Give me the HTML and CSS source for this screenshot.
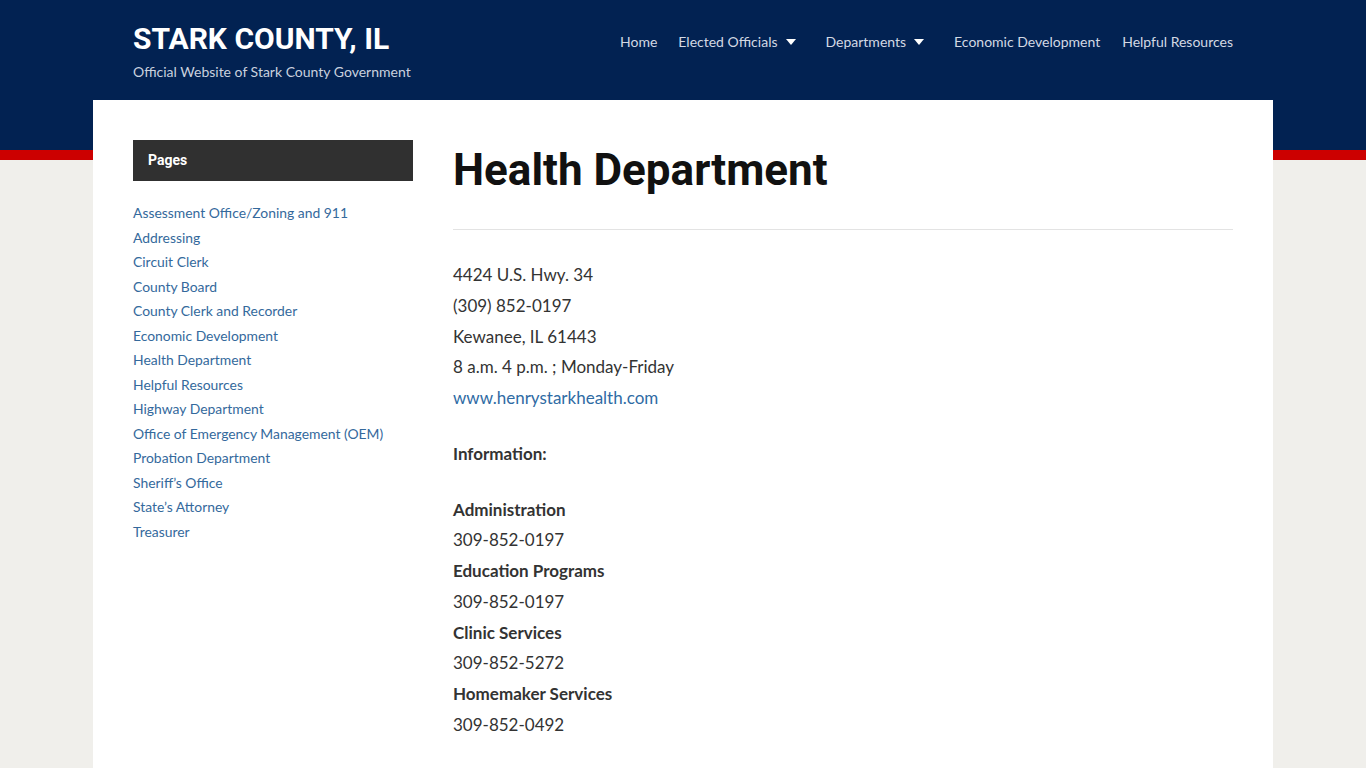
FILE: index.html
```html
<!DOCTYPE html>
<html lang="en">
<head>
<meta charset="utf-8">
<title>Health Department – Stark County, IL</title>
<link rel="stylesheet" href="styles.css">
</head>
<body>
<header class="site-header">
  <div class="header-inner">
    <div class="branding">
      <div class="site-title">STARK COUNTY, IL</div>
      <div class="site-desc">Official Website of Stark County Government</div>
    </div>
    <nav class="main-nav">
      <a href="#" class="nav-link">Home</a>
      <a href="#" class="nav-link has-caret">Elected Officials<span class="caret"></span></a>
      <a href="#" class="nav-link has-caret">Departments<span class="caret"></span></a>
      <a href="#" class="nav-link">Economic Development</a>
      <a href="#" class="nav-link">Helpful Resources</a>
    </nav>
  </div>
</header>
<div class="page-box">
  <aside class="sidebar">
    <div class="widget-title">Pages</div>
    <ul class="page-list">
      <li><a href="#">Assessment Office/Zoning and 911</a></li>
      <li><a href="#">Addressing</a></li>
      <li><a href="#">Circuit Clerk</a></li>
      <li><a href="#">County Board</a></li>
      <li><a href="#">County Clerk and Recorder</a></li>
      <li><a href="#">Economic Development</a></li>
      <li><a href="#">Health Department</a></li>
      <li><a href="#">Helpful Resources</a></li>
      <li><a href="#">Highway Department</a></li>
      <li><a href="#">Office of Emergency Management (OEM)</a></li>
      <li><a href="#">Probation Department</a></li>
      <li><a href="#">Sheriff’s Office</a></li>
      <li><a href="#">State’s Attorney</a></li>
      <li><a href="#">Treasurer</a></li>
    </ul>
  </aside>
  <main class="content">
    <div class="entry-header">
      <h1 class="entry-title">Health Department</h1>
    </div>
    <div class="entry-body">
      <p>4424 U.S. Hwy. 34<br>(309) 852-0197<br>Kewanee, IL 61443<br>8 a.m. 4 p.m. ; Monday-Friday<br><a href="#">www.henrystarkhealth.com</a></p>
      <p><strong>Information:</strong></p>
      <p><strong>Administration</strong><br>309-852-0197<br><strong>Education Programs</strong><br>309-852-0197<br><strong>Clinic Services</strong><br>309-852-5272<br><strong>Homemaker Services</strong><br>309-852-0492</p>
    </div>
  </main>
</div>
</body>
</html>
```
FILE: styles.css
```css
* { box-sizing: border-box; }
html, body { margin: 0; padding: 0; }
body {
  background: #f0efeb;
  font-family: "Lato", "Liberation Sans", sans-serif;
  color: #333;
}
a { text-decoration: none; }

.site-header {
  background: #022252;
  border-bottom: 10px solid #cc0000;
  height: 160px;
}
.header-inner {
  width: 1100px;
  margin: 0 auto;
  display: flex;
  justify-content: space-between;
  align-items: flex-start;
  padding-top: 21px;
}
.site-title {
  font-family: "Roboto", "Liberation Sans", sans-serif;
  font-weight: 700;
  font-size: 30px;
  line-height: 36px;
  color: #ffffff;
}
.site-desc {
  font-size: 14px;
  line-height: 20px;
  color: #c9d1df;
  margin-top: 5px;
}
.main-nav {
  display: flex;
  align-items: center;
  padding-top: 11px;
  margin-right: -11px;
}
.nav-link {
  display: flex;
  align-items: center;
  font-size: 14px;
  line-height: 20px;
  color: #d3d9e4;
  padding: 0 11px;
}
.nav-link:first-child { padding-left: 12px; padding-right: 10px; }
.caret {
  display: inline-block;
  width: 0;
  height: 0;
  border-left: 5px solid transparent;
  border-right: 5px solid transparent;
  border-top: 6px solid #ffffff;
  margin: 0 8px 0 8px;
}

.page-box {
  width: 1180px;
  margin: -60px auto 0;
  background: #ffffff;
  padding: 40px;
  display: flex;
  gap: 40px;
  min-height: 700px;
}
.sidebar {
  width: 280px;
  flex: none;
}
.widget-title {
  background: #303030;
  color: #ffffff;
  font-family: "Roboto", "Liberation Sans", sans-serif;
  font-weight: 700;
  font-size: 14px;
  height: 41px;
  line-height: 41px;
  padding-left: 15px;
}
.page-list {
  list-style: none;
  margin: 20px 0 0;
  padding: 0;
}
.page-list li {
  font-size: 13.9px;
  line-height: 24.5px;
}
.page-list a { color: #34699c; }

.content {
  flex: 1;
  min-width: 0;
}
.entry-header {
  border-bottom: 1px solid #e3e3e3;
  padding-top: 2px;
  padding-bottom: 31px;
}
.entry-title {
  margin: 0;
  font-family: "Roboto", "Liberation Sans", sans-serif;
  font-weight: 700;
  font-size: 44px;
  line-height: 56px;
  color: #111111;
}
.entry-body {
  padding-top: 30px;
}
.entry-body p {
  margin: 0 0 25px;
  font-size: 17px;
  line-height: 30.75px;
}
.entry-body strong { font-weight: 700; }
.entry-body a { color: #2f6ba4; }
```
